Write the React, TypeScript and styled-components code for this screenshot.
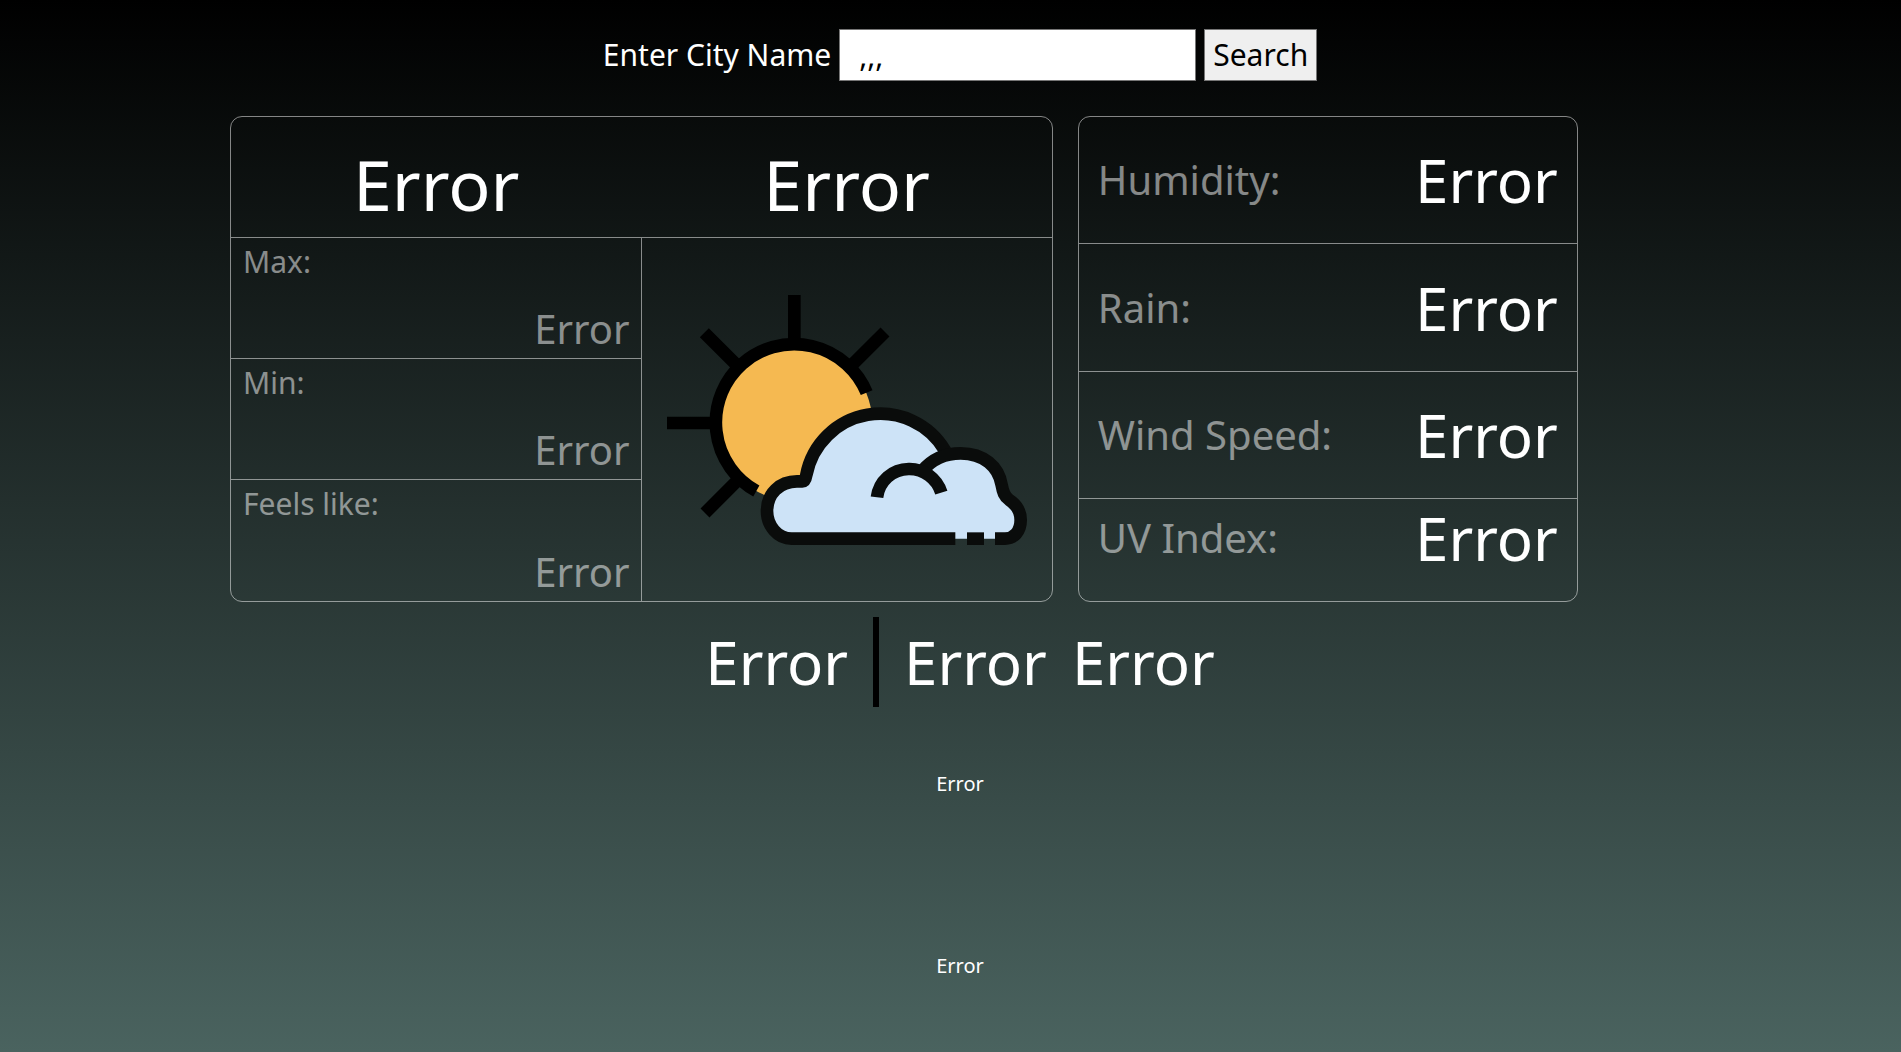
import { useState } from "react";
import type { FormEvent } from "react";
import styled, { createGlobalStyle } from "styled-components";

const GlobalStyle = createGlobalStyle`
  *, *::before, *::after { box-sizing: border-box; }
  html, body { height: 100%; }
  body { margin: 0; }
`;

const muted = "rgba(255, 255, 255, 0.5)";

const Page = styled.main`
  display: flex;
  flex-direction: column;
  min-height: 100vh;
  color: #fff;
  font-family: "Noto Sans", sans-serif;
  background: linear-gradient(#000, #4a635f);
`;

const SearchForm = styled.form`
  display: flex;
  justify-content: center;
  align-items: center;
  gap: 8px;
  padding: 29px 0 0 1%;
  font-size: 30px;
  line-height: 40px;
`;

const CityInput = styled.input`
  width: 357px;
  height: 52px;
  padding: 0 19px;
  border: 1px solid #767676;
  font: inherit;
  color: #000;
  background: #fff;
`;

const SearchButton = styled.button`
  height: 52px;
  padding: 0 8px;
  border: 1px solid #767676;
  border-radius: 0;
  font: inherit;
  color: #000;
  background: #efefef;
`;

const Cards = styled.section`
  display: grid;
  grid-template-columns: minmax(0, 1fr) 500px;
  gap: 25px;
  margin: 35px 17% 0 12.1%;
`;

const Card = styled.div`
  display: grid;
  border: 1px solid ${muted};
  border-radius: 12px;
`;

const CurrentCard = styled(Card)`
  grid-template-columns: 1fr 1fr;
  grid-template-rows: repeat(4, 121px);
`;

const Headline = styled.h1`
  margin: 0;
  padding-top: 20px;
  border-bottom: 1px solid ${muted};
  font-size: 70px;
  font-weight: 400;
  line-height: 94px;
  text-align: center;
`;

const Reading = styled.div<{ $last?: boolean }>`
  display: flex;
  flex-direction: column;
  justify-content: space-between;
  padding: 0 12px 2px;
  border-bottom: ${(p) => (p.$last ? "none" : `1px solid ${muted}`)};
  color: ${muted};
`;

const ReadingLabel = styled.span`
  font-size: 30px;
  line-height: 48px;
`;

const ReadingValue = styled.span`
  font-size: 40px;
  line-height: 54px;
  text-align: right;
`;

const Picture = styled.div`
  grid-column: 2;
  grid-row: 2 / span 3;
  display: flex;
  align-items: center;
  justify-content: center;
  padding: 0 24px;
  border-left: 1px solid ${muted};

  svg {
    width: 100%;
    max-width: 360px;
    height: auto;
  }
`;

const DetailCard = styled(Card)`
  grid-template-rows: 5fr 5fr 5fr 4fr;
`;

const Detail = styled.div<{ $last?: boolean }>`
  display: flex;
  align-items: center;
  justify-content: space-between;
  padding: 0 19px ${(p) => (p.$last ? "25px" : "0")};
  border-bottom: ${(p) => (p.$last ? "none" : `1px solid ${muted}`)};
`;

const DetailLabel = styled.span`
  font-size: 40px;
  line-height: 54px;
  color: ${muted};
`;

const BigText = styled.span`
  font-size: 60px;
  line-height: 76px;
`;

const Place = styled.section`
  display: flex;
  justify-content: center;
  align-items: center;
  gap: 25px;
  padding: 15px 0 0 1%;
`;

const Divider = styled.span`
  width: 6px;
  height: 90px;
  background: #000;
`;

const Notes = styled.section`
  display: grid;
  gap: 154px;
  justify-items: center;
  padding: 63px 0 0 1%;
`;

const Note = styled.p`
  margin: 0;
  font-size: 20px;
  line-height: 28px;
`;

const readings = ["Max:", "Min:", "Feels like:"];
const details = ["Humidity:", "Rain:", "Wind Speed:", "UV Index:"];

function PartlyCloudy() {
  return (
    <svg viewBox="0 0 1080 750" fill="none" strokeWidth="38" role="img" aria-label="Partly cloudy">
      <circle cx="382" cy="384" r="234" fill="#f5b951" />
      <g stroke="#000">
        <path d="M599 293A235 235 0 1 0 268 588" />
        <path d="M382 0V140M0 384H140M112 113L212 213M654 111L554 211M114 654L212 556" />
      </g>
      <path
        fill="#cde3f7"
        d="M374 731C332 731 300 692 300 648C300 596 338 559 390 559H406Q415 559 418 540A226 226 0 0 1 833 479Q855 475 881 475C950 475 995 515 1004 570C1008 592 1012 604 1026 614C1050 630 1061 650 1061 675C1061 710 1040 731 1014 731Z"
      />
      <g stroke="#0a0c0b">
        <path d="M865 731H374C332 731 300 692 300 648C300 596 338 559 390 559H406Q415 559 418 540A226 226 0 0 1 835 468" />
        <path d="M766 527C800 487 840 475 881 475C950 475 995 515 1004 570C1008 592 1012 604 1026 614C1050 630 1061 650 1061 675C1061 710 1040 731 1014 731H984" />
        <path d="M630 607A96 96 0 0 1 725 522A100 100 0 0 1 823 593" />
        <path d="M900 731H951" />
      </g>
    </svg>
  );
}

export default function App() {
  const [city, setCity] = useState(",,,");
  const [result] = useState("Error");

  const search = (event: FormEvent) => event.preventDefault();

  return (
    <Page>
      <GlobalStyle />
      <SearchForm onSubmit={search}>
        <label htmlFor="city">Enter City Name</label>
        <CityInput id="city" type="text" value={city} onChange={(e) => setCity(e.target.value)} />
        <SearchButton type="submit">Search</SearchButton>
      </SearchForm>

      <Cards>
        <CurrentCard>
          <Headline>{result}</Headline>
          <Headline as="h2">{result}</Headline>
          {readings.map((label, i) => (
            <Reading key={label} $last={i === readings.length - 1}>
              <ReadingLabel>{label}</ReadingLabel>
              <ReadingValue>{result}</ReadingValue>
            </Reading>
          ))}
          <Picture>
            <PartlyCloudy />
          </Picture>
        </CurrentCard>

        <DetailCard>
          {details.map((label, i) => (
            <Detail key={label} $last={i === details.length - 1}>
              <DetailLabel>{label}</DetailLabel>
              <BigText>{result}</BigText>
            </Detail>
          ))}
        </DetailCard>
      </Cards>

      <Place>
        <BigText>{result}</BigText>
        <Divider />
        <BigText>{result}</BigText>
        <BigText>{result}</BigText>
      </Place>

      <Notes>
        <Note>{result}</Note>
        <Note>{result}</Note>
      </Notes>
    </Page>
  );
}
